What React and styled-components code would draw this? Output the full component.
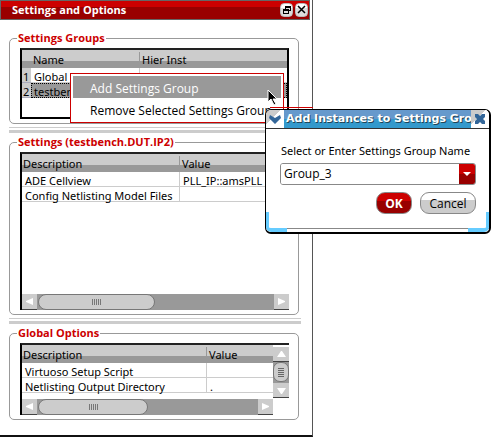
import React from "react";
import styled, { createGlobalStyle, css } from "styled-components";

const GlobalStyle = createGlobalStyle`
  * { box-sizing: border-box; }
  body { margin: 0; background: #fff; color: #000; overflow: hidden; }
  body, button, input { font-family: "Open Sans", "Noto Sans", sans-serif; font-size: 12px; line-height: 16px; }
`;

const Desktop = styled.main`
  position: relative;
`;

const Window = styled.section`
  margin-right: 178px;
  padding-right: 2px;
  border-right: 1px solid #555;
  border-bottom: 2px solid #111;
`;

const TitleBar = styled.header`
  display: flex;
  align-items: center;
  gap: 2px;
  height: 20px;
  padding: 0 1px 0 11px;
  border: 1px solid #666;
  background: linear-gradient(#c00 6px, #900 6px);
`;

const Title = styled.h1`
  flex: 1;
  margin: 0;
  color: #fff;
  font-size: 11px;
  line-height: 18px;
  font-weight: 700;
`;

const WindowButton = styled.button`
  display: flex;
  width: 13px;
  height: 14px;
  padding: 0;
  border: 1px solid #bbb;
  border-radius: 4px;
  background: linear-gradient(#fff 4px, #ddd 4px);
`;

const Content = styled.div`
  display: flex;
  flex-direction: column;
  padding: 10px 9px 15px;
`;

const Group = styled.fieldset`
  min-width: 0;
  margin: 0 2px 0 0;
  padding: 2px 9px 4px 10px;
  border: 1px solid #999;
  border-radius: 5px;
`;

const Legend = styled.legend`
  margin-left: -3px;
  padding: 0 1px;
  color: #c00;
  font-weight: 700;
  font-size: 11px;
  line-height: 16px;
`;

const Splitter = styled.hr`
  width: 100%;
  height: 6px;
  margin: 3px 0 1px;
  border: solid #ccc;
  border-width: 1px 0 3px;
`;

const ListFrame = styled.div`
  height: ${(p) => p.$height}px;
  border: solid #000;
  border-width: ${(p) => (p.$closed ? "2px" : "2px 0 0 2px")};
  border-top-color: #222;
  display: flex;
  flex-direction: column;
  overflow: hidden;
`;

const ListBody = styled.div`
  display: flex;
  flex: 1;
  min-height: 0;
`;

const Grid = styled.table`
  width: 100%;
  min-width: 0;
  align-self: flex-start;
  table-layout: fixed;
  border-collapse: separate;
  border-spacing: 0;
  font-family: "Noto Sans", "Open Sans", sans-serif;
  font-size: 11px;
`;

const HeadCell = styled.th`
  width: ${(p) => (p.$width ? `${p.$width}px` : "auto")};
  height: 18px;
  padding: 2px 0 0 ${(p) => p.$indent || 1}px;
  background: ${(p) =>
    p.$divided
      ? "linear-gradient(#999, #999) left 2px / 1px 14px no-repeat, linear-gradient(#ccc 11px, #999 11px)"
      : "linear-gradient(#ccc 11px, #999 11px)"};
  font-weight: 400;
  text-align: left;
`;

const Cell = styled.td`
  height: 15px;
  padding: 3px 0 0 3px;
  line-height: 11px;
  white-space: nowrap;
  border-bottom: 1px solid #ccc;
  border-left: ${(p) => (p.$divided ? "1px solid #ccc" : "0")};
  ${(p) =>
    p.$selected &&
    css`
      background: #999;
      border: 1px dotted #000;
      padding: 2px 0 0 2px;
    `}
`;

const RowNumber = styled.th`
  height: 15px;
  padding: 3px 0 0 1px;
  background: #ccc;
  border-bottom: 1px solid #aab;
  font-weight: 400;
  line-height: 11px;
  text-align: left;
`;

const Track = styled.div`
  display: flex;
  flex-direction: ${(p) => (p.$vertical ? "column" : "row")};
  flex: none;
  ${(p) =>
    p.$vertical
      ? css`
          width: 16px;
          margin: 2px 0 1px;
        `
      : css`
          height: 16px;
          margin-right: ${p.$inset || 0}px;
        `}
  background: #999;
`;

const StepButton = styled.button`
  display: flex;
  align-items: center;
  justify-content: center;
  flex: none;
  width: ${(p) => (p.$vertical ? 16 : 15)}px;
  height: ${(p) => (p.$vertical ? 15 : 16)}px;
  padding: 0;
  border: 0;
  border-bottom: 1px solid #444;
  background: #ccc;
`;

const Thumb = styled.div`
  display: flex;
  align-items: center;
  justify-content: center;
  background: #ccc;
  border: 1px solid #777;
  ${(p) =>
    p.$vertical
      ? css`
          height: 20px;
          border-radius: 7px;
        `
      : css`
          width: ${p.$share}%;
          margin-left: 1px;
          border-radius: 8px;
        `}
`;

const Spacer = styled.div`
  flex: 1;
`;

const Menu = styled.div`
  position: absolute;
  left: 70px;
  top: 73px;
  width: 214px;
  display: flex;
  flex-direction: column;
  padding: 2px;
  border: 1px solid #c00;
  background: #fff;
`;

const MenuItem = styled.button`
  height: 22px;
  padding: 3px 0 0 17px;
  border: 0;
  background: ${(p) => (p.$active ? "#999" : "#fff")};
  color: ${(p) => (p.$active ? "#fff" : "#000")};
  text-align: left;
  white-space: nowrap;
`;

const DropShadowLine = styled.div`
  position: absolute;
  left: 270px;
  right: 178px;
  top: 107px;
  height: 1px;
  background: #c00;
`;

const Pointer = styled.svg`
  position: absolute;
  left: 267px;
  top: 89px;
`;

const Dialog = styled.section`
  position: absolute;
  left: 265px;
  right: 0;
  top: 109px;
  border: 1px solid #000;
  border-right-width: 2px;
  border-bottom-width: 2px;
  border-radius: 6px;
  background: #fff;
  overflow: hidden;
`;

const DialogBar = styled.header`
  display: flex;
  height: 19px;
  border-bottom: 1px solid #333;
`;

const DialogTitle = styled.h2`
  flex: 1;
  min-width: 0;
  margin: 0;
  padding-left: 2px;
  background: linear-gradient(#69c 9px, #39c 9px);
  color: #fff;
  font: 700 11px/18px "DejaVu Sans", sans-serif;
  text-shadow: 1px 1px 0 #245;
  white-space: nowrap;
  overflow: hidden;
`;

const BarButton = styled.button`
  display: flex;
  align-items: center;
  justify-content: center;
  width: 18px;
  padding: 0;
  border: 0;
  background: linear-gradient(135deg, #ccc 10px, #fff 10px);
`;

const Form = styled.form`
  display: flex;
  flex-direction: column;
  padding: 14px 13px 14px 14px;
`;

const Label = styled.label`
  padding-left: 1px;
  font-family: "Noto Sans", "Open Sans", sans-serif;
  font-size: 11px;
  white-space: nowrap;
`;

const Combo = styled.div`
  display: flex;
  height: 22px;
  margin-top: 4px;
  border: 1px solid #888;
  border-radius: 3px;
  overflow: hidden;
`;

const ComboInput = styled.input`
  flex: 1;
  min-width: 0;
  padding: 0 3px;
  border: 0;
  outline: 0;
  background: #fff;
`;

const ComboButton = styled.button`
  display: flex;
  align-items: center;
  justify-content: center;
  width: 16px;
  padding: 0;
  border: 0;
  background: linear-gradient(#c00 10px, #900 10px);
`;

const Actions = styled.div`
  display: flex;
  justify-content: flex-end;
  gap: 8px;
  margin-top: 7px;
`;

const ActionButton = styled.button`
  width: ${(p) => (p.$primary ? 36 : 56)}px;
  height: 22px;
  padding: 2px 0 0;
  border: 1px solid #888;
  border-radius: 9px;
  color: ${(p) => (p.$primary ? "#fff" : "#000")};
  font-weight: ${(p) => (p.$primary ? 700 : 400)};
  background: ${(p) =>
    p.$primary
      ? "linear-gradient(#c00 8px, #900 8px)"
      : "linear-gradient(#fff 7px, #ccc 7px)"};
`;

const ResizeEdge = styled.footer`
  display: flex;
  justify-content: space-between;
  height: 4px;
  border-top: 1px solid #888;
`;

const ResizeCorner = styled.span`
  width: 21px;
  height: 20px;
  margin-top: -17px;
  border: solid #6cf;
  border-width: ${(p) => (p.$right ? "0 3px 4px 0" : "0 0 4px 3px")};
  border-radius: ${(p) => (p.$right ? "0 0 5px 0" : "0 0 0 5px")};
`;

const arrows = {
  left: "M8 1v7L1 5V4z",
  right: "M1 1v7l7-3V4z",
  up: "M4 1h1l4 6H0z",
  down: "M0 2h9L5 8H4z",
};

function Step({ dir, label, vertical }) {
  return (
    <StepButton type="button" aria-label={label} $vertical={vertical}>
      <svg width="9" height="9" viewBox="0 0 9 9">
        <path d={arrows[dir]} fill="#fff" />
      </svg>
    </StepButton>
  );
}

function HorizontalBar({ share, inset }) {
  return (
    <Track $inset={inset}>
      <Step dir="left" label="Scroll left" />
      <Thumb $share={share}>
        <svg width="9" height="6" shapeRendering="crispEdges">
          <path d="M0 0h1v6H0zM2 0h1v6H2zM4 0h1v6H4zM6 0h1v6H6zM8 0h1v6H8z" fill="#777" />
        </svg>
      </Thumb>
      <Spacer />
      <Step dir="right" label="Scroll right" />
    </Track>
  );
}

function VerticalBar() {
  return (
    <Track $vertical>
      <Step dir="up" label="Scroll up" vertical />
      <Thumb $vertical>
        <svg width="6" height="9" shapeRendering="crispEdges">
          <path d="M0 0h6v1H0zM0 2h6v1H0zM0 4h6v1H0zM0 6h6v1H0zM0 8h6v1H0z" fill="#666" />
        </svg>
      </Thumb>
      <Spacer />
      <Step dir="down" label="Scroll down" vertical />
    </Track>
  );
}

function PropertyGrid({ rows, width }) {
  return (
    <Grid>
      <thead>
        <tr>
          <HeadCell $width={width}>Description</HeadCell>
          <HeadCell $divided $indent={3}>Value</HeadCell>
        </tr>
      </thead>
      <tbody>
        {rows.map(([name, value]) => (
          <tr key={name}>
            <Cell>{name}</Cell>
            <Cell $divided>{value}</Cell>
          </tr>
        ))}
      </tbody>
    </Grid>
  );
}

export default function App() {
  return (
    <Desktop>
      <GlobalStyle />
      <Window>
        <TitleBar>
          <Title>Settings and Options</Title>
          <WindowButton type="button" aria-label="Restore">
            <svg width="11" height="12" viewBox="0 0 11 12" shapeRendering="crispEdges">
              <path d="M4 2h6v5H8V6h1V4H5v1H4zM2 5h6v5H2zM3 7v2h4V7z" fill="#000" fillRule="evenodd" />
            </svg>
          </WindowButton>
          <WindowButton type="button" aria-label="Close">
            <svg width="11" height="12" viewBox="0 0 11 12">
              <path d="M2 2l7 7M9 2l-7 7" stroke="#000" strokeWidth="1.5" />
            </svg>
          </WindowButton>
        </TitleBar>
        <Content>
          <Group>
            <Legend>Settings Groups</Legend>
            <ListFrame $height={71} $closed>
              <Grid>
                <thead>
                  <tr>
                    <HeadCell $width={9} aria-label="Row" />
                    <HeadCell $width={108} $indent={2}>Name</HeadCell>
                    <HeadCell $divided $indent={3}>Hier Inst</HeadCell>
                  </tr>
                </thead>
                <tbody>
                  <tr>
                    <RowNumber>1</RowNumber>
                    <Cell>Global</Cell>
                    <Cell $divided />
                  </tr>
                  <tr>
                    <RowNumber>2</RowNumber>
                    <Cell $selected>testbench</Cell>
                    <Cell $selected />
                  </tr>
                </tbody>
              </Grid>
            </ListFrame>
          </Group>
          <Splitter />
          <Group>
            <Legend>Settings (testbench.DUT.IP2)</Legend>
            <ListFrame $height={158}>
              <ListBody>
                <PropertyGrid
                  width={157}
                  rows={[
                    ["ADE Cellview", "PLL_IP::amsPLL"],
                    ["Config Netlisting Model Files", ""],
                  ]}
                />
              </ListBody>
              <HorizontalBar share={44} />
            </ListFrame>
          </Group>
          <Splitter />
          <Group>
            <Legend>Global Options</Legend>
            <ListFrame $height={72}>
              <ListBody>
                <PropertyGrid
                  width={184}
                  rows={[
                    ["Virtuoso Setup Script", ""],
                    ["Netlisting Output Directory", "."],
                  ]}
                />
                <VerticalBar />
              </ListBody>
              <HorizontalBar share={44} inset={16} />
            </ListFrame>
          </Group>
        </Content>
      </Window>

      <Menu role="menu">
        <MenuItem type="button" role="menuitem" $active>Add Settings Group</MenuItem>
        <MenuItem type="button" role="menuitem">Remove Selected Settings Group</MenuItem>
      </Menu>
      <DropShadowLine />
      <Pointer width="11" height="17" viewBox="0 0 11 17" aria-hidden="true">
        <path d="M1 1v12l3-3 3 6 2-1-3-5h4z" fill="#000" stroke="#fff" strokeWidth="1" />
      </Pointer>

      <Dialog role="dialog" aria-labelledby="dialog-title">
        <DialogBar>
          <BarButton type="button" aria-label="Window menu">
            <svg width="14" height="10" viewBox="0 0 14 10">
              <path d="M2 1l5 3 5-3 1 3-6 6-6-6z" fill="#369" />
            </svg>
          </BarButton>
          <DialogTitle id="dialog-title">Add Instances to Settings Group</DialogTitle>
          <BarButton type="button" aria-label="Close dialog">
            <svg width="12" height="12" viewBox="0 0 12 12">
              <path d="M1 1h3l2 2 2-2h3v3L9 6l2 2v3H8L6 9l-2 2H1V8l2-2-2-2z" fill="#369" />
            </svg>
          </BarButton>
        </DialogBar>
        <Form onSubmit={(e) => e.preventDefault()}>
          <Label htmlFor="group-name">Select or Enter Settings Group Name</Label>
          <Combo>
            <ComboInput id="group-name" defaultValue="Group_3" />
            <ComboButton type="button" aria-label="Show groups">
              <svg width="8" height="4" viewBox="0 0 8 4">
                <path d="M0 0h8L4 4z" fill="#fff" />
              </svg>
            </ComboButton>
          </Combo>
          <Actions>
            <ActionButton $primary type="submit">OK</ActionButton>
            <ActionButton type="button">Cancel</ActionButton>
          </Actions>
        </Form>
        <ResizeEdge>
          <ResizeCorner />
          <ResizeCorner $right />
        </ResizeEdge>
      </Dialog>
    </Desktop>
  );
}
